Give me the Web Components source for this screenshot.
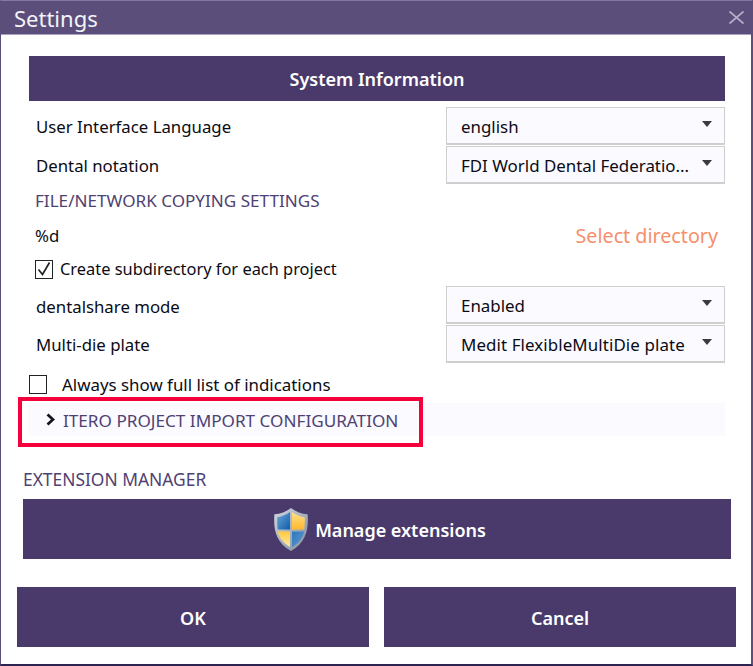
<!DOCTYPE html>
<html lang="en">
<head>
<meta charset="utf-8">
<title>Settings</title>
<style>
    html, body { margin: 0; height: 100%; background: #fff; }
    body { font-family: "Noto Sans", "Open Sans", sans-serif; color: #0b0b14; }
</style>
</head>
<body>
<settings-dialog>
    <span slot="title">Settings</span>
    <band-button style="--h:45px;--ml:28px;--mr:26px;--mt:21px">System Information</band-button>
    <form-row label="User Interface Language" style="margin-top:6px"><drop-down>english</drop-down></form-row>
    <form-row label="Dental notation" style="margin-top:1px"><drop-down>FDI World Dental Federatio...</drop-down></form-row>
    <section-label style="--ml:34px;--mt:6px;--fs:17.100px">FILE/NETWORK COPYING SETTINGS</section-label>
    <directory-row path="%d" style="margin-top:6px">Select directory</directory-row>
    <check-box checked style="--ml:34px;--gap:7px;--mt:5px;--fs:16.400px">Create subdirectory for each project</check-box>
    <form-row label="dentalshare mode" style="margin-top:7px;--lt:2px"><drop-down>Enabled</drop-down></form-row>
    <form-row label="Multi-die plate" style="margin-top:1px"><drop-down style="letter-spacing:.1px">Medit FlexibleMultiDie plate</drop-down></form-row>
    <check-box style="--ml:28px;--gap:15px;--mt:11px;--fs:16.900px;--tt:0">Always show full list of indications</check-box>
    <collapse-row>ITERO PROJECT IMPORT CONFIGURATION</collapse-row>
    <section-label style="--ml:22px;--mt:32px;--fs:17.400px">EXTENSION MANAGER</section-label>
    <band-button style="--h:60px;--ml:22px;--mr:20px;--mt:9px;--pt:1px">
        <svg width="40" height="45" viewBox="0 0 38 46" style="margin:0 4px 0 3px">
            <defs>
                <linearGradient id="rim" x1="0" y1="0" x2="1" y2="1">
                    <stop offset="0" stop-color="#cfd6de"/><stop offset="1" stop-color="#7f8ca0"/>
                </linearGradient>
                <linearGradient id="blueA" x1="0" y1="0" x2="1" y2="1">
                    <stop offset="0" stop-color="#6fa6d8"/><stop offset="1" stop-color="#0f5ca8"/>
                </linearGradient>
                <linearGradient id="blueB" x1="0" y1="0" x2="1" y2="1">
                    <stop offset="0" stop-color="#2f79bd"/><stop offset="1" stop-color="#5d97cc"/>
                </linearGradient>
                <linearGradient id="yelA" x1="0" y1="0" x2="0" y2="1">
                    <stop offset="0" stop-color="#ffe08a"/><stop offset="1" stop-color="#fdb92e"/>
                </linearGradient>
                <linearGradient id="yelB" x1="0" y1="0" x2="0" y2="1">
                    <stop offset="0" stop-color="#ffc93e"/><stop offset="1" stop-color="#ffe9a6"/>
                </linearGradient>
            </defs>
            <path d="M19 1 C24 5 30 7 36 7.500 C37 22 35 36 19 45 C3 36 1 22 2 7.500 C8 7 14 5 19 1 Z" fill="url(#rim)"/>
            <path d="M18 5 C14 8 9 10 5 10.500 C4.800 15 5 19 5.500 23 H18 Z" fill="url(#blueA)"/>
            <path d="M20 5 C24 8 29 10 33 10.500 C33.200 15 33 19 32.500 23 H20 Z" fill="url(#yelA)"/>
            <path d="M5.500 25 H18 V41 C10 36 7 31 5.500 25 Z" fill="url(#yelB)"/>
            <path d="M32.500 25 H20 V41 C28 36 31 31 32.500 25 Z" fill="url(#blueB)"/>
        </svg>
        <span>Manage extensions</span>
    </band-button>
    <dialog-actions>
        <band-button style="--h:60px;--pt:1px;flex:1">OK</band-button>
        <band-button style="--h:60px;--pt:1px;flex:1">Cancel</band-button>
    </dialog-actions>
</settings-dialog>

<script>
class SettingsDialog extends HTMLElement {
    connectedCallback() {
        this.attachShadow({ mode: 'open' });
        this.shadowRoot.innerHTML = `
            <style>
                :host {
                    display: flex;
                    flex-direction: column;
                    box-sizing: border-box;
                    height: 666px;
                    border: solid #5b4e7b;
                    border-width: 1px 2px 2px 1px;
                    border-top-color: #8478a0;
                    border-bottom-color: #2d2350;
                    background: #fff;
                }
                .title {
                    display: flex;
                    align-items: center;
                    justify-content: space-between;
                    flex: none;
                    box-sizing: border-box;
                    height: 34px;
                    padding: 0 7px 0 13px;
                    background: #5b4e7b;
                    color: #f4f3f8;
                    font-size: 22px;
                    border-bottom: 1px solid #a9a2c0;
                }
                svg { display: block; }
            </style>
            <div class="title">
                <slot name="title"></slot>
                <svg width="15" height="13" viewBox="0 0 15 13">
                    <path d="M0.500 0.500 L14.500 12.500 M14.500 0.500 L0.500 12.500" stroke="#b5aec9" stroke-width="1.800" fill="none"/>
                </svg>
            </div>
            <slot></slot>
        `;
    }
}

class BandButton extends HTMLElement {
    connectedCallback() {
        this.attachShadow({ mode: 'open' });
        this.shadowRoot.innerHTML = `
            <style>
                :host {
                    display: flex;
                    align-items: center;
                    justify-content: center;
                    flex: none;
                    box-sizing: border-box;
                    height: var(--h);
                    margin: var(--mt, 0) var(--mr, 0) 0 var(--ml, 0);
                    padding-top: var(--pt, 0);
                    background: #493a6b;
                    color: #fff;
                    font-size: 18px;
                    font-weight: 600;
                }
            </style>
            <slot></slot>
        `;
    }
}

class FormRow extends HTMLElement {
    connectedCallback() {
        this.attachShadow({ mode: 'open' });
        this.shadowRoot.innerHTML = `
            <style>
                :host {
                    display: flex;
                    align-items: center;
                    justify-content: space-between;
                    height: 38px;
                    padding: 0 26px 0 35px;
                    font-size: 16.800px;
                }
                span { margin-top: var(--lt, 0); }
            </style>
            <span>${this.getAttribute('label')}</span>
            <slot></slot>
        `;
    }
}

class DropDown extends HTMLElement {
    connectedCallback() {
        this.attachShadow({ mode: 'open' });
        this.shadowRoot.innerHTML = `
            <style>
                :host {
                    display: flex;
                    align-items: center;
                    justify-content: space-between;
                    box-sizing: border-box;
                    width: 279px;
                    height: 38px;
                    padding: 1px 12px 0 14px;
                    border: 1px solid #cfcfcf;
                    border-width: 1px 1px 2px 1px;
                    background: #fafaff;
                    font-size: 16.900px;
                    white-space: nowrap;
                }
                i {
                    width: 0;
                    height: 0;
                    border: 5px solid transparent;
                    border-top: 6px solid #3c3c3c;
                    border-bottom: 0;
                    margin-top: -5px;
                }
            </style>
            <slot></slot><i></i>
        `;
    }
}

class SectionLabel extends HTMLElement {
    connectedCallback() {
        this.attachShadow({ mode: 'open' });
        this.shadowRoot.innerHTML = `
            <style>
                :host {
                    display: block;
                    margin: var(--mt, 0) 0 0 var(--ml, 0);
                    height: 22px;
                    line-height: 22px;
                    color: #4f4272;
                    font-size: var(--fs);
                }
            </style>
            <slot></slot>
        `;
    }
}

class DirectoryRow extends HTMLElement {
    connectedCallback() {
        this.attachShadow({ mode: 'open' });
        this.shadowRoot.innerHTML = `
            <style>
                :host {
                    display: flex;
                    align-items: center;
                    justify-content: space-between;
                    height: 36px;
                    padding: 0 33px 0 34px;
                    font-size: 16.800px;
                }
                span { margin-top: -2px; }
                a { color: #f58f6c; font-size: 19.700px; margin-top: -2px; }
            </style>
            <span>${this.getAttribute('path')}</span>
            <a><slot></slot></a>
        `;
    }
}

class CheckBox extends HTMLElement {
    connectedCallback() {
        this.attachShadow({ mode: 'open' });
        const tick = this.hasAttribute('checked')
            ? '<svg width="16" height="16" viewBox="0 0 16 16"><path d="M2.500 8.500 L6.500 13.500 L13.500 1.500" stroke="#222" stroke-width="1.700" fill="none"/></svg>'
            : '';
        this.shadowRoot.innerHTML = `
            <style>
                :host {
                    display: flex;
                    align-items: center;
                    gap: var(--gap);
                    height: 20px;
                    margin: var(--mt, 0) 0 0 var(--ml, 0);
                    font-size: var(--fs);
                }
                .box {
                    display: flex;
                    align-items: center;
                    justify-content: center;
                    box-sizing: border-box;
                    flex: none;
                    width: 18px;
                    height: 19px;
                    border: 1px solid #222;
                    background: #fff;
                }
                .text { margin-top: var(--tt, -1px); }
            </style>
            <span class="box">${tick}</span>
            <span class="text"><slot></slot></span>
        `;
    }
}

class CollapseRow extends HTMLElement {
    connectedCallback() {
        this.attachShadow({ mode: 'open' });
        this.shadowRoot.innerHTML = `
            <style>
                :host {
                    display: flex;
                    align-items: center;
                    gap: 8px;
                    position: relative;
                    box-sizing: border-box;
                    height: 33px;
                    margin: 9px 26px 0 27px;
                    padding: 1px 0 0 18px;
                    background: #fafaff;
                    color: #4f4272;
                    font-size: 17.150px;
                }
                svg { margin-top: -1px; }
                .mark {
                    position: absolute;
                    left: -10px;
                    top: -6px;
                    width: 405px;
                    height: 50px;
                    box-sizing: border-box;
                    border: 4px solid #f5003c;
                }
            </style>
            <svg width="9" height="13" viewBox="0 0 9 13">
                <path d="M1.500 1.500 L7 6.500 L1.500 11.500" stroke="#15151f" stroke-width="2.800" fill="none"/>
            </svg>
            <span><slot></slot></span>
            <div class="mark"></div>
        `;
    }
}

class DialogActions extends HTMLElement {
    connectedCallback() {
        this.attachShadow({ mode: 'open' });
        this.shadowRoot.innerHTML = `
            <style>
                :host {
                    display: flex;
                    gap: 15px;
                    margin: 28px 15px 0 16px;
                }
            </style>
            <slot></slot>
        `;
    }
}

customElements.define('settings-dialog', SettingsDialog);
customElements.define('band-button', BandButton);
customElements.define('form-row', FormRow);
customElements.define('drop-down', DropDown);
customElements.define('section-label', SectionLabel);
customElements.define('directory-row', DirectoryRow);
customElements.define('check-box', CheckBox);
customElements.define('collapse-row', CollapseRow);
customElements.define('dialog-actions', DialogActions);
</script>
</body>
</html>
